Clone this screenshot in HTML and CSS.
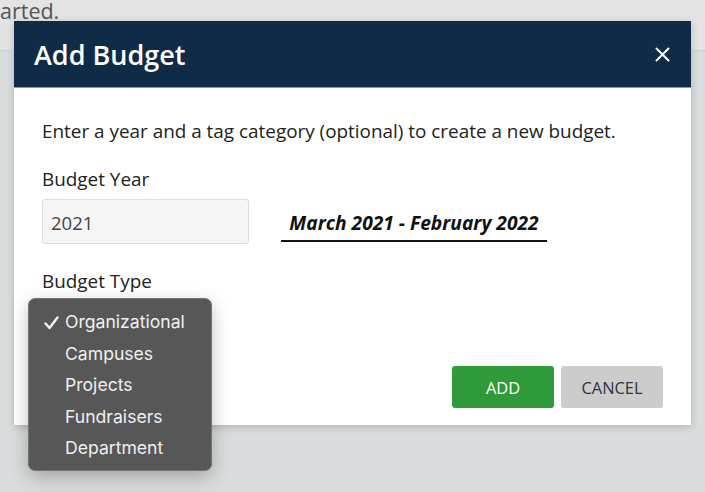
FILE: index.html
```html
<!DOCTYPE html>
<html>
<head>
<meta charset="utf-8">
<link rel="stylesheet" href="styles.css">
</head>
<body>
<div class="page-top"><span class="page-text">arted.</span></div>

<div class="modal">
  <div class="modal-header">
    <h2 class="modal-title">Add Budget</h2>
    <span class="close">
      <svg width="15" height="15" viewBox="0 0 15 15"><path d="M1.5 1.5 L13.5 13.5 M13.5 1.5 L1.5 13.5" stroke="#fff" stroke-width="2" stroke-linecap="round"/></svg>
    </span>
  </div>
  <div class="modal-body">
    <p class="intro">Enter a year and a tag category (optional) to create a new budget.</p>
    <div class="field-label">Budget Year</div>
    <div class="year-row">
      <div class="year-input">2021</div>
      <div class="period">March 2021 - February 2022</div>
    </div>
    <div class="field-label type-label">Budget Type</div>
    <div class="actions">
      <button class="btn btn-add">ADD</button>
      <button class="btn btn-cancel">CANCEL</button>
    </div>
  </div>
</div>

<ul class="menu">
  <li class="menu-item selected"><svg class="check" width="15" height="14" viewBox="0 0 15 14"><path d="M1.5 7.5 L5.5 12 L13.5 1.5" fill="none" stroke="#f2f2f2" stroke-width="2.4" stroke-linecap="round" stroke-linejoin="round"/></svg>Organizational</li>
  <li class="menu-item">Campuses</li>
  <li class="menu-item">Projects</li>
  <li class="menu-item">Fundraisers</li>
  <li class="menu-item">Department</li>
</ul>
</body>
</html>
```
FILE: styles.css
```css
* { box-sizing: border-box; }
html, body { margin: 0; padding: 0; }
body {
  width: 705px;
  height: 492px;
  overflow: hidden;
  background: #d9dcdc;
  font-family: "Open Sans", sans-serif;
  position: relative;
}
.page-top {
  height: 51px;
  background: #e3e3e3;
  border-bottom: 1px solid #cfd1d1;
}
.page-text {
  display: block;
  font-size: 21.5px;
  color: #555;
  line-height: 21px;
  padding-top: 0;
}
.modal {
  position: absolute;
  left: 14px;
  top: 21px;
  width: 677px;
  height: 404px;
  background: #fff;
  box-shadow: 0 2px 8px rgba(0,0,0,0.18);
}
.modal-header {
  height: 67px;
  background: #0f2b48;
  display: flex;
  align-items: center;
  justify-content: space-between;
  padding: 0 21px 0 20px;
  border-bottom: 1px solid #8a9aa8;
}
.modal-title {
  margin: 0;
  color: #fff;
  font-size: 27px;
  font-weight: 600;
  line-height: 32px;
  margin-top: 1px;
}
.close {
  display: flex;
  width: 15px;
  height: 15px;
  margin-top: 1px;
}
.modal-body {
  padding: 30px 28px 0 28px;
}
.intro {
  margin: 0;
  font-size: 18.9px;
  line-height: 26px;
  color: #222;
}
.field-label {
  font-size: 18.9px;
  line-height: 26px;
  color: #222;
  margin-top: 22px;
}
.year-row {
  display: flex;
  align-items: flex-start;
  margin-top: 7px;
}
.year-input {
  width: 207px;
  height: 45px;
  background: #f5f5f5;
  border: 1px solid #ddd;
  border-radius: 3px;
  padding: 2px 8px 0;
  font-size: 18.5px;
  color: #444;
  display: flex;
  align-items: center;
}
.period {
  margin-left: 32px;
  margin-top: 10px;
  width: 266px;
  border-bottom: 2px solid #111;
  font-size: 19.2px;
  line-height: 26px;
  font-weight: 700;
  font-style: italic;
  color: #111;
  text-align: center;
  padding: 1px 0 4px;
}
.type-label {
  margin-top: 24px;
}
.actions {
  display: flex;
  justify-content: flex-end;
  gap: 7px;
  margin-top: 72px;
}
.btn {
  width: 102px;
  height: 42px;
  border: none;
  border-radius: 3px;
  font-family: "Open Sans", sans-serif;
  font-size: 16.4px;
  padding-top: 1px;
}
.btn-add {
  background: #2e9a3a;
  color: #fff;
}
.btn-cancel {
  background: #cccccc;
  color: #2c3440;
}
.menu {
  position: absolute;
  left: 28px;
  top: 298px;
  width: 184px;
  height: 173px;
  margin: 0;
  padding: 7px 0 0 0;
  list-style: none;
  background: #575757;
  border: 1px solid #767676;
  border-radius: 7px;
  box-shadow: 0 6px 18px rgba(0,0,0,0.25);
  font-family: Inter, "Liberation Sans", sans-serif;
}
.menu-item {
  height: 31.5px;
  line-height: 31.5px;
  padding-left: 36px;
  font-size: 17.6px;
  color: #f0f0f0;
  position: relative;
}
.check {
  position: absolute;
  left: 15px;
  top: 10px;
}
```
